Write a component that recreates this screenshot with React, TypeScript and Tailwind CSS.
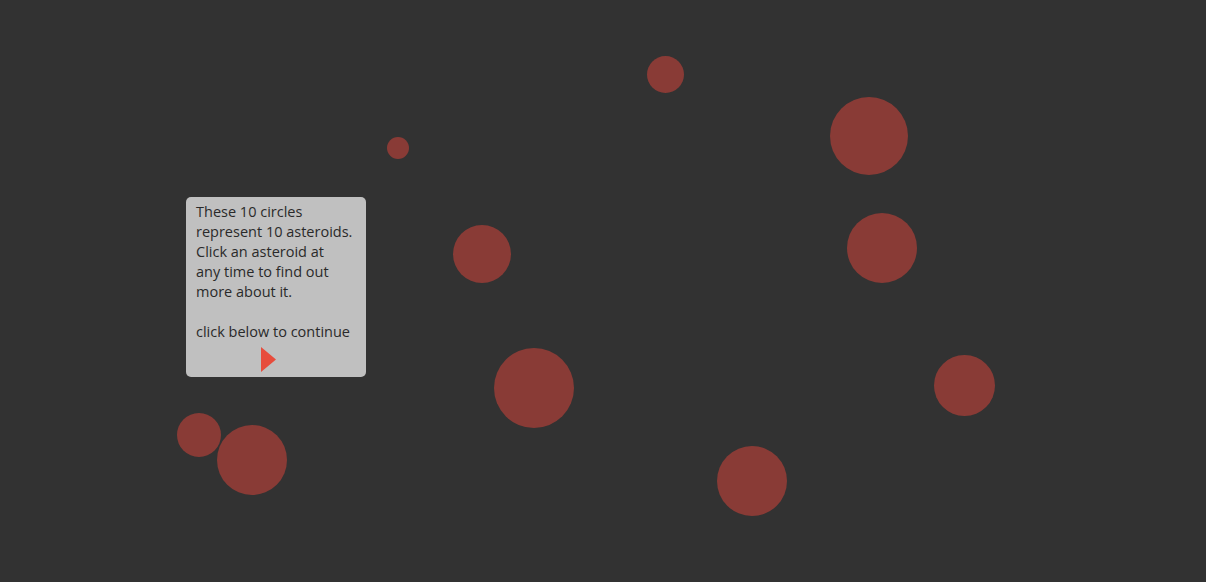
const asteroids = [
  { x: 665.5, y: 74.5, r: 18.5 },
  { x: 398.3, y: 148.3, r: 11 },
  { x: 869, y: 136, r: 39 },
  { x: 881.7, y: 248, r: 35 },
  { x: 481.7, y: 254, r: 29 },
  { x: 534, y: 387.7, r: 40 },
  { x: 964, y: 385, r: 30.5 },
  { x: 198.7, y: 434.5, r: 22 },
  { x: 251.7, y: 460.3, r: 35 },
  { x: 752.3, y: 481, r: 35 },
];

const lines = [
  'These 10 circles',
  'represent 10 asteroids.',
  'Click an asteroid at',
  'any time to find out',
  'more about it.',
];

const App = () => {
  return (
    <main className="relative w-full h-[582px] overflow-hidden bg-[#323232] font-['Open_Sans',sans-serif]">
      {asteroids.map((a, i) => (
        <div
          key={i}
          className="absolute rounded-full bg-[#893b36]"
          style={{ left: a.x - a.r, top: a.y - a.r, width: a.r * 2, height: a.r * 2 }}
        />
      ))}

      <div className="absolute left-[186px] top-[197px] w-[180px] h-[180px] rounded-[5px] bg-[#c0c0c0] px-[10px] pt-[5px] text-[14.5px] leading-[20px] text-[#2a2a2a]">
        {lines.map((l) => (
          <p key={l} className="whitespace-nowrap">
            {l}
          </p>
        ))}
        <p className="mt-[20px] whitespace-nowrap">click below to continue</p>
        <button className="mt-[5px] ml-[65px] block cursor-pointer" aria-label="continue">
          <svg width="15" height="25" viewBox="0 0 15 25">
            <polygon points="0,0 15,12.5 0,25" fill="#e74c3c" />
          </svg>
        </button>
      </div>
    </main>
  );
};

export default App;
